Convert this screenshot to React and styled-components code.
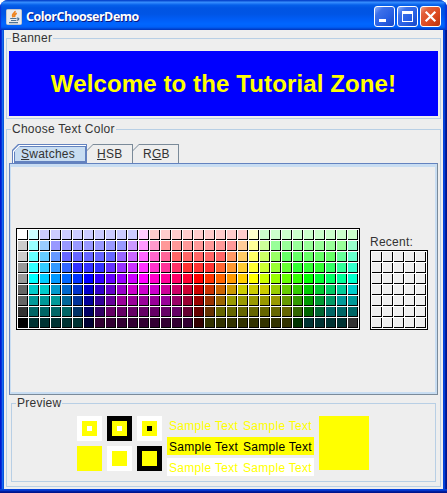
import React from "react";
import styled, { createGlobalStyle } from "styled-components";

const GlobalStyle = createGlobalStyle`
  body { margin: 0; background: #fff; }
  * { box-sizing: border-box; }
`;

const Window = styled.div`
  width: 447px;
  height: 493px;
  display: flex;
  flex-direction: column;
  border-radius: 8px 8px 0 0;
  overflow: hidden;
  background: linear-gradient(
    90deg, #0019cf 0 1px, #0831d9 1px 2px, #166aee 2px 3px, #0855dd 3px 4px,
    #0855dd 4px 443px, #0441d8 443px 445px, #001ea0 445px 446px, #00138c 446px
  );
  font: 12px/15px "Liberation Sans", Arial, sans-serif;
  letter-spacing: 0.25px;
  color: #333;
  cursor: default;
`;

const TitleBar = styled.header`
  height: 30px;
  flex: none;
  display: flex;
  align-items: center;
  padding: 3px 6px 0 6px;
  background: linear-gradient(
    180deg, #0a4bd0 0, #0a4bd0 1px, #3a92ff 2px, #2a82fa 3px, #0560ea 5px,
    #0054e3 8px, #0055e5 14px, #005cf5 19px, #0066ff 24px, #0060f8 27px, #0043cf 29px, #0036b8 30px
  );
  box-shadow: inset 2px 0 1px -1px #0831d9, inset -3px 0 2px -1px #0831d9;
`;

const Title = styled.h1`
  margin: 0 auto 0 4px;
  padding-top: 1px;
  font: bold 12.5px/18px "Open Sans", "Noto Sans", sans-serif;
  letter-spacing: -0.48px;
  color: #fff;
  text-shadow: 1px 1px 0 #0a1883;
`;

const Controls = styled.div`
  display: flex;
  gap: 2px;
`;

const ControlButton = styled.button`
  width: 21px;
  height: 21px;
  padding: 0;
  display: grid;
  place-items: center;
  border: 1px solid #fff;
  border-radius: 3px;
  background: ${(p) =>
    p.$danger
      ? "linear-gradient(135deg, #f0a088 0, #e2603c 22%, #dd4a20 60%, #b8330c 100%)"
      : "linear-gradient(135deg, #8db0fa 0, #3c70ea 25%, #2860e4 60%, #1748c8 100%)"};
  svg { display: block; }
`;

const Body = styled.main`
  height: 459px;
  flex: none;
  display: flex;
  flex-direction: column;
  gap: 3px;
  margin: 0 4px;
  padding: 1px 2px 2px;
  background: #eee;
`;

const Frame = styled.div`
  height: 4px;
  flex: none;
  background: linear-gradient(180deg, #0441d8 0 1px, #0436cc 1px 2px, #001ea0 2px 3px, #00138c 3px);
`;

const Group = styled.fieldset`
  min-width: 0;
  height: ${(p) => p.$height}px;
  margin: ${(p) => p.$margin || "0"};
  padding: ${(p) => p.$padding || "0"};
  border: 1px solid #b8cfe5;
`;

const Legend = styled.legend`
  height: 15px;
  margin-left: ${(p) => p.$inset || 2}px;
  padding: 0 1px;
`;

const Banner = styled.div`
  height: 65px;
  display: flex;
  align-items: center;
  justify-content: center;
  background: #00f;
  color: #ff0;
  font-size: 24px;
  line-height: 28px;
  font-weight: bold;
  letter-spacing: 0.12px;
  white-space: nowrap;
`;

const TabBar = styled.nav`
  display: flex;
  height: 19px;
  padding-left: 3px;
`;

const cut = "polygon(6px 0, 100% 0, 100% 100%, 0 100%, 0 6px)";

const Tab = styled.button`
  position: relative;
  z-index: 0;
  width: ${(p) => p.$width}px;
  height: 19px;
  border: 0;
  padding: 1px 0 0 ${(p) => (p.$selected ? 9 : 10)}px;
  text-align: left;
  font: inherit;
  letter-spacing: inherit;
  color: #333;
  clip-path: ${cut};
  background: ${(p) => (p.$selected ? "#6382bf" : "#7a8a99")};
  &::before, &::after {
    content: "";
    position: absolute;
    z-index: -1;
    clip-path: ${cut};
  }
  &::before {
    inset: 1px 1px 0 ${(p) => (p.$selected ? 1 : 0)}px;
    background: ${(p) => (p.$selected ? "#fff" : "#eee")};
  }
  &::after {
    inset: 2px 1px 0 2px;
    display: ${(p) => (p.$selected ? "block" : "none")};
    background: linear-gradient(#c8ddf2, #c8ddf2) 1px 1px / calc(100% - 2px) calc(100% - 3px) no-repeat #6382bf;
  }
`;

const TabPane = styled.section`
  height: 232px;
  display: flex;
  align-items: flex-end;
  gap: 10px;
  padding: 0 0 64px 6px;
  border: 1px solid #6382bf;
  border-right-color: #7a8a99;
  border-bottom-color: #7a8a99;
  box-shadow: inset 1px 0 #c8ddf2, inset 0 3px #c8ddf2, inset -2px -2px #c8ddf2;
`;

const SwatchGrid = styled.div`
  display: grid;
  grid-template-columns: repeat(${(p) => p.$columns}, 10px);
  grid-auto-rows: 10px;
  gap: 1px;
  padding: 1px;
  border: 1px solid #000;
  background: #fff;
`;

const Swatch = styled.i`
  border: solid #000;
  border-width: 0 1px 1px 0;
  background-color: rgb(${(p) => p.$rgb.join(", ")});
`;

const Recent = styled.div`
  margin-top: auto;
`;

const Preview = styled.div`
  display: flex;
  align-items: flex-start;
  gap: 5px;
  margin-left: 65px;
`;

const SquareGrid = styled.div`
  display: grid;
  grid-template-columns: repeat(3, 25px);
  gap: 5px;
`;

const Square = styled.div`
  width: ${(p) => p.$size}px;
  height: ${(p) => p.$size}px;
  display: grid;
  place-items: center;
  background: ${(p) => p.$color};
`;

const Samples = styled.div`
  width: 147px;
  display: grid;
  gap: 3px;
  letter-spacing: 0.3px;
`;

const Sample = styled.div`
  height: 18px;
  padding: 3px 2px 0;
  display: flex;
  justify-content: space-between;
  white-space: nowrap;
  color: ${(p) => p.$color};
  background: ${(p) => p.$background || "transparent"};
`;

const ChosenColor = styled.div`
  width: 50px;
  height: 54px;
  background: #ff0;
`;

// Each palette row is a list of "rgb" colours, with "*n" for a run of n cells.
const palette = [
  "fff cff ccf*9 fcf fcc*9 ffc cfc*9",
  "ccc 9ff 9cf 99f*7 c9f f9f f9c f99*7 fc9 ff9 cf9 9f9*7 9fc",
  "ccc 6ff 6cf 69f 66f*5 96f c6f f6f f6c f69 f66*5 f96 fc6 ff6 cf6 9f6 6f6*5 6f9 6fc",
  "999 3ff 3cf 39f 36f 33f*3 63f 93f c3f f3f f3c f39 f36 f33*3 f63 f93 fc3 ff3 cf3 9f3 6f3 3f3*3 3f6 3f9 3fc",
  "999 0ff 0cf 09f 06f 03f 00f 30f 60f 90f c0f f0f f0c f09 f06 f03 f00 f30 f60 f90 fc0 ff0 cf0 9f0 6f0 3f0 0f0 0f3 0f6 0f9 0fc",
  "666 0cc*2 09c 06c 03c 00c 30c 60c 90c c0c*3 c09 c06 c03 c00 c30 c60 c90 cc0*3 9c0 6c0 3c0 0c0 0c3 0c6 0c9 0cc",
  "666 099*3 069 039 009 309 609 909*5 906 903 900 930 960 990*5 690 390 090 093 096 099*2",
  "333 066*4 036 006 306 606*7 603 600 630 660*7 360 060 063 066*3",
  "000 033*5 003 303*9 300 330*8 030 033*4 333",
].flatMap((row) =>
  row.split(" ").flatMap((run) => {
    const [color, count = 1] = run.split("*");
    return Array(Number(count)).fill([...color].map((digit) => parseInt(digit, 16) * 17));
  })
);

const emptySwatch = [238, 238, 238];

const JavaIcon = () => (
  <svg width="16" height="16" viewBox="0 0 16 16" fill="none">
    <rect x=".5" y=".5" width="15" height="15" rx="1" fill="#e9ebee" stroke="#c3c6cc" />
    <path d="M9 2C9.8 4 4.8 5 7.2 8.2M10.8 4.2C8 5.4 8.4 6.6 8.6 8.2" stroke="#ee8420" strokeWidth="1.7" />
    <path d="M4.2 9.5h6.3M5 11.5h5.2M3 13.6h9M11 9.2c2.6-.6 2.4 1.8-.2 2.2" stroke="#4d7394" strokeWidth="1.2" />
  </svg>
);

const rings = [
  ["#fff", "#ff0", "#fff"],
  ["#000", "#ff0", "#fff"],
  ["#fff", "#ff0", "#000"],
  ["#ff0"],
  ["#fff", "#ff0"],
  ["#000", "#ff0"],
];

const NestedSquare = ({ colors, size = 25 }) => (
  <Square $size={size} $color={colors[0]}>
    {colors.length > 1 && <NestedSquare colors={colors.slice(1)} size={size - 10} />}
  </Square>
);

const samples = [
  { color: "#ff0" },
  { color: "#000", background: "#ff0" },
  { color: "#ff0", background: "#fff" },
];

export default function App() {
  return (
    <>
      <GlobalStyle />
      <Window>
        <TitleBar>
          <JavaIcon />
          <Title>ColorChooserDemo</Title>
          <Controls>
            <ControlButton aria-label="Minimize">
              <svg width="19" height="19"><path d="M4 12h7v3H4z" fill="#fff" /></svg>
            </ControlButton>
            <ControlButton aria-label="Maximize">
              <svg width="19" height="19"><path fillRule="evenodd" d="M4 4h11v11H4zM5 7v7h9V7z" fill="#fff" /></svg>
            </ControlButton>
            <ControlButton aria-label="Close" $danger>
              <svg width="19" height="19"><path d="M4.7 4.7l9.6 9.6M14.3 4.7l-9.6 9.6" stroke="#fff" strokeWidth="2.2" /></svg>
            </ControlButton>
          </Controls>
        </TitleBar>
        <Body>
          <Group $height={88} $padding="5px 2px 2px">
            <Legend>Banner</Legend>
            <Banner>Welcome to the Tutorial Zone!</Banner>
          </Group>
          <Group $height={365} $padding="7px 2px 0">
            <Legend>Choose Text Color</Legend>
            <TabBar>
              <Tab $selected $width={75}><u>S</u>watches</Tab>
              <Tab $width={46}><u>H</u>SB</Tab>
              <Tab $width={46}>R<u>G</u>B</Tab>
            </TabBar>
            <TabPane>
              <SwatchGrid $columns={31}>
                {palette.map((rgb, i) => <Swatch key={i} $rgb={rgb} />)}
              </SwatchGrid>
              <Recent>
                Recent:
                <SwatchGrid $columns={5}>
                  {Array.from({ length: 35 }, (_, i) => <Swatch key={i} $rgb={emptySwatch} />)}
                </SwatchGrid>
              </Recent>
            </TabPane>
            <Group $height={86} $margin="1px 2px 0" $padding="5px 0 0 0">
              <Legend $inset={4}>Preview</Legend>
              <Preview>
                <SquareGrid>
                  {rings.map((colors, i) => <NestedSquare key={i} colors={colors} />)}
                </SquareGrid>
                <Samples>
                  {samples.map((s, i) => (
                    <Sample key={i} $color={s.color} $background={s.background}>
                      <span>Sample Text</span>
                      <span>Sample Text</span>
                    </Sample>
                  ))}
                </Samples>
                <ChosenColor />
              </Preview>
            </Group>
          </Group>
        </Body>
        <Frame />
      </Window>
    </>
  );
}
